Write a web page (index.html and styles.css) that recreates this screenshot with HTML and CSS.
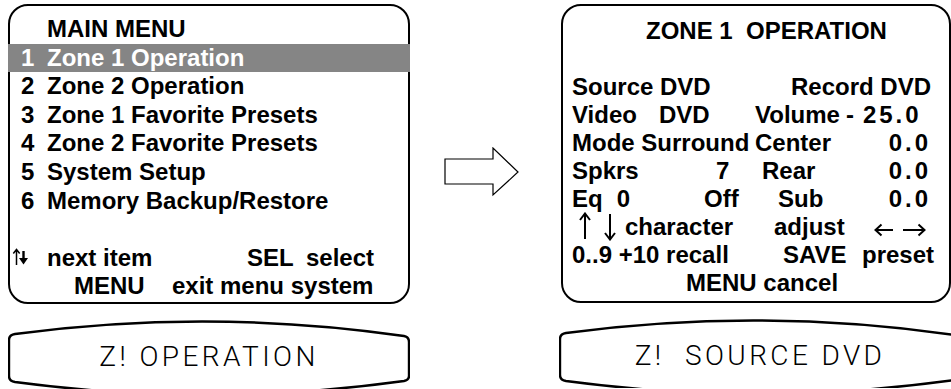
FILE: index.html
```html
<!DOCTYPE html>
<html>
  <head>
    <meta charset="UTF-8" />
    <title>Zone 1 Operation</title>
    <link rel="stylesheet" href="styles.css">
  </head>
  <body>
    <div class="screen">
      <div class="col left">
        <div class="osd menu">
          <div class="row title">MAIN MENU</div>
          <div class="row sel"><span class="num">1</span>Zone 1 Operation</div>
          <div class="row"><span class="num">2</span>Zone 2 Operation</div>
          <div class="row"><span class="num">3</span>Zone 1 Favorite Presets</div>
          <div class="row"><span class="num">4</span>Zone 2 Favorite Presets</div>
          <div class="row"><span class="num">5</span>System Setup</div>
          <div class="row"><span class="num">6</span>Memory Backup/Restore</div>
          <div class="row"></div>
          <div class="row hint">
            <svg class="updown" width="16" height="18" viewBox="0 0 16 18">
              <path d="M4.5 17 V2 M1.3 5.5 L4.5 1.5 L7.7 5.5" fill="none" stroke="#000" stroke-width="1.5"/>
              <path d="M11.5 3 V11" stroke="#000" stroke-width="2.4"/>
              <path d="M7 10 H16 L11.5 16.5 Z" fill="#000"/>
            </svg>
            <span class="next">next item</span>
            <span class="key-sel">SEL</span>
            <span>select</span>
          </div>
          <div class="row hint">
            <span class="key-menu">MENU</span>
            <span>exit menu system</span>
          </div>
        </div>
        <div class="lcd">
          <svg class="lcd-frame" width="402" height="69" viewBox="0 0 402 69">
            <path d="M7 14 Q201 -12 396 16 Q401 17 401 22 L401 56 Q401 60 396 61 Q201 88 7 62 Q1 61 1 56 L1 20 Q1 15 7 14 Z" fill="#fff" stroke="#000" stroke-width="2.4"/>
          </svg>
          <span class="lcd-text">Z! OPERATION</span>
        </div>
      </div>

      <div class="mid">
        <svg class="go" width="76" height="50" viewBox="0 0 76 50">
          <path d="M1 12 H49 V1 L74 25 L49 48 V37 H1 Z" fill="#fff" stroke="#000" stroke-width="1.2"/>
        </svg>
      </div>

      <div class="col right">
        <div class="osd zone">
          <div class="zrow"><span class="ztitle">ZONE 1&nbsp; OPERATION</span></div>
          <div class="zrow"></div>
          <div class="zrow">
            <span class="ab">Source DVD</span>
            <span class="cd end record">Record DVD</span>
          </div>
          <div class="zrow">
            <span class="ab">Video<span class="dvd">DVD</span></span>
            <span class="cd">Volume<span class="dash">-</span><span class="level">25.0</span></span>
          </div>
          <div class="zrow">
            <span class="ab">Mode Surround</span>
            <span class="c">Center</span>
            <span class="d end val">0.0</span>
          </div>
          <div class="zrow">
            <span class="a">Spkrs</span>
            <span class="b seven">7</span>
            <span class="c rear">Rear</span>
            <span class="d end val">0.0</span>
          </div>
          <div class="zrow">
            <span class="a">Eq<span class="eq">0</span></span>
            <span class="b">Off</span>
            <span class="c sub">Sub</span>
            <span class="d end val">0.0</span>
          </div>
          <div class="zrow">
            <span class="ab arrows">
              <svg class="varrow" width="12" height="28" viewBox="0 0 12 28">
                <path d="M6 27 V2 M1 8 L6 1.5 L11 8" fill="none" stroke="#000" stroke-width="2"/>
              </svg>
              <svg class="varrow dn" width="12" height="28" viewBox="0 0 12 28">
                <path d="M6 1 V26 M1 20 L6 26.5 L11 20" fill="none" stroke="#000" stroke-width="2"/>
              </svg>
              character
            </span>
            <span class="c adjust">adjust</span>
            <span class="d lr">
              <svg class="harrow" width="20" height="14" viewBox="0 0 20 14">
                <path d="M19 7 H1.5 M7.5 1.5 L1.5 7 L7.5 12.5" fill="none" stroke="#000" stroke-width="2"/>
              </svg>
              <svg class="harrow right-arrow" width="24" height="14" viewBox="0 0 24 14">
                <path d="M1 7 H22.5 M16.5 1.5 L22.5 7 L16.5 12.5" fill="none" stroke="#000" stroke-width="2"/>
              </svg>
            </span>
          </div>
          <div class="zrow">
            <span class="ab">0..9 +10 recall</span>
            <span class="c save">SAVE</span>
            <span class="d">preset</span>
          </div>
          <div class="zrow"><span class="cancel">MENU cancel</span></div>
        </div>
        <div class="lcd">
          <svg class="lcd-frame" width="402" height="69" viewBox="0 0 402 69">
            <path d="M7 14 Q201 -12 396 16 Q401 17 401 22 L401 56 Q401 60 396 61 Q201 88 7 62 Q1 61 1 56 L1 20 Q1 15 7 14 Z" fill="#fff" stroke="#000" stroke-width="2.4"/>
          </svg>
          <span class="lcd-text">Z!&nbsp;&nbsp;SOURCE DVD</span>
        </div>
      </div>
    </div>
  </body>
</html>
```

FILE: styles.css
```css
html,
body {
  margin: 0;
  overflow: hidden;
  background: #fff;
}
body {
  font-family: "Liberation Sans", Arial, sans-serif;
  font-weight: bold;
  color: #000;
  padding: 4px 0 0 8px;
}
.screen {
  display: flex;
  align-items: flex-start;
}
.col {
  display: flex;
  flex-direction: column;
  gap: 16px;
}
.left {
  width: 402px;
}
.mid {
  width: 149px;
  flex: none;
}
.go {
  display: block;
  margin: 143px 0 0 34px;
}
.right {
  width: 402px;
  flex: none;
}

/* on screen display boxes */
.osd {
  box-sizing: border-box;
  border: 2px solid #000;
  border-radius: 20px;
  font-size: 24px;
}
.menu {
  height: 300px;
  padding-top: 9px;
}
.row {
  height: 28.6px;
  line-height: 28.6px;
  padding-left: 11px;
  display: flex;
  white-space: nowrap;
}
.row.title {
  padding-left: 37px;
}
.num {
  width: 26px;
  flex: none;
}
.row.sel {
  background: #858585;
  color: #fff;
  margin: 0 -2px;
  padding-left: 13px;
}
.hint {
  padding-left: 0;
  align-items: center;
}
.updown {
  margin: 0 0 3px 2px;
  flex: none;
}
.next {
  margin-left: 19px;
  width: 200px;
}
.key-sel {
  width: 59px;
}
.key-menu {
  margin-left: 64px;
  width: 98px;
}

.zone {
  width: 390px;
  margin-left: 2px;
  height: 299px;
  padding: 11px 0 0 9px;
}
.zrow {
  display: grid;
  grid-template-columns: 132px 51px 107px 72px;
  height: 28px;
  line-height: 28px;
  white-space: nowrap;
}
.ztitle {
  grid-column: 1 / 5;
  margin-left: 74px;
}
.ab {
  grid-column: 1 / 3;
}
.a {
  grid-column: 1;
}
.b {
  grid-column: 2;
}
.c {
  grid-column: 3;
}
.d {
  grid-column: 4;
}
.cd {
  grid-column: 3 / 5;
}
.end {
  justify-self: end;
}
.record {
  margin-right: 3px;
}
.dash {
  margin: 0 9px 0 6px;
}
.level {
  letter-spacing: 3px;
}
.val {
  letter-spacing: 3px;
  margin-right: 3px;
}
.dvd {
  margin-left: 22px;
}
.eq {
  margin-left: 14px;
}
.seven {
  margin-left: 12px;
}
.rear {
  margin-left: 7px;
}
.sub {
  margin-left: 23px;
}
.arrows {
  margin-left: 7px;
  display: flex;
  align-items: center;
}
.varrow {
  flex: none;
  margin-top: -2px;
}
.dn {
  margin: 0 9px 0 13px;
}
.adjust {
  margin-left: 19px;
}
.lr {
  margin-left: 12px;
  display: flex;
  align-items: center;
  padding-top: 6px;
}
.right-arrow {
  margin-left: 8px;
}
.save {
  margin-left: 28px;
}
.cancel {
  grid-column: 1 / 5;
  margin-left: 114px;
}

/* lcd front panel displays */
.lcd {
  position: relative;
  width: 402px;
  height: 69px;
  display: flex;
  justify-content: center;
}
.lcd-frame {
  position: absolute;
  left: 0;
  top: 0;
}
.lcd-text {
  position: relative;
  margin-top: 22px;
  font-family: Roboto, "Liberation Sans", sans-serif;
  font-weight: 300;
  font-size: 28px;
  line-height: 30px;
  letter-spacing: 3.4px;
}
```
